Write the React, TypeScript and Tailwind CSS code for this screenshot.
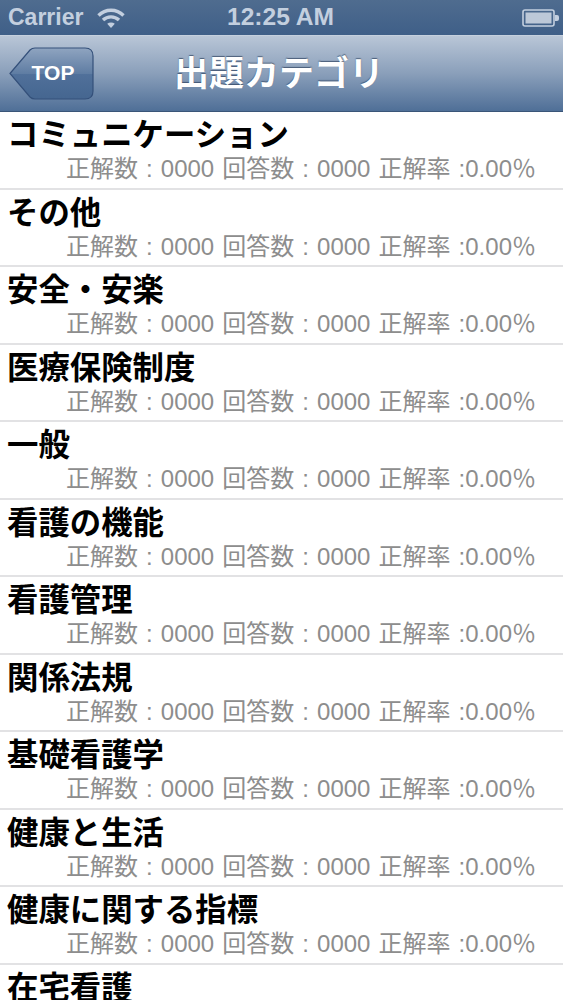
const categories = [
  "コミュニケーション",
  "その他",
  "安全・安楽",
  "医療保険制度",
  "一般",
  "看護の機能",
  "看護管理",
  "関係法規",
  "基礎看護学",
  "健康と生活",
  "健康に関する指標",
  "在宅看護",
];

const sans = "font-['Liberation_Sans','Noto_Sans_CJK_JP',sans-serif]";

function Wifi() {
  return (
    <svg width="28" height="22" viewBox="0 0 28 22" fill="none" stroke="#c3cfdf" strokeWidth="3.4">
      <path d="M1.5 8.5C8.5 1.5 19.5 1.5 26.5 8.5" />
      <path d="M6 13c4.5-4.2 11.5-4.2 16 0" />
      <path d="M14 21l-3.8-4.2c2.2-1.7 5.4-1.7 7.6 0z" fill="#c3cfdf" stroke="none" />
    </svg>
  );
}

function Battery() {
  return (
    <svg width="38" height="18" viewBox="0 0 38 18">
      <rect x="1" y="1" width="31" height="16" rx="2" fill="none" stroke="#c3cfdf" strokeWidth="1.6" />
      <rect x="3.5" y="3.5" width="26" height="11" fill="#bcc8d8" />
      <path d="M33 6h2a2 2 0 0 1 2 2v2a2 2 0 0 1-2 2h-2z" fill="#c3cfdf" />
    </svg>
  );
}

function BackButton() {
  return (
    <div className="relative h-[53px] w-[85px]">
      <svg width="85" height="53" viewBox="0 0 85 53" className="absolute inset-0">
        <defs>
          <linearGradient id="back" x1="0" y1="0" x2="0" y2="1">
            <stop offset="0" stopColor="#8fa4c0" />
            <stop offset="0.5" stopColor="#5f7da3" />
            <stop offset="0.52" stopColor="#50709a" />
            <stop offset="1" stopColor="#456690" />
          </linearGradient>
        </defs>
        <path
          d="M1 26.5 L21 3 Q23 1 26 1 H76 Q84 1 84 9 V44 Q84 52 76 52 H26 Q23 52 21 50 Z"
          fill="url(#back)"
          stroke="#34507a"
          strokeWidth="1.2"
        />
      </svg>
      <span className="absolute inset-0 flex items-center justify-center pb-[3px] pl-[3px] text-[21px] leading-none font-bold text-white">
        TOP
      </span>
    </div>
  );
}

export default function App() {
  return (
    <div className={`h-[1000px] w-[563px] overflow-hidden bg-white ${sans}`}>
      <div className="flex h-[35px] items-center justify-between bg-gradient-to-b from-[#4f6c8f] to-[#3f5f88] pr-[2px] pl-[8px] text-[#c3cfdf]">
        <div className="flex w-[192px] items-center gap-[14px]">
          <span className="text-[23px] leading-none font-bold">Carrier</span>
          <Wifi />
        </div>
        <span className="text-[24.6px] leading-none font-bold">12:25 AM</span>
        <div className="flex w-[200px] justify-end pr-[1px]">
          <Battery />
        </div>
      </div>

      <div className="flex h-[77px] items-center border-t border-b border-t-[#c5d0de] border-b-[#3a5578] bg-gradient-to-b from-[#b9c6d7] via-[#8a9fba] to-[#4f6f97] pl-[9px]">
        <BackButton />
        <h1 className="ml-[80px] text-[35px] leading-none font-bold text-white [text-shadow:0_-1px_1px_rgba(40,60,90,0.7)]">
          出題カテゴリ
        </h1>
      </div>

      <ul>
        {categories.map((name) => (
          <li
            key={name}
            className="h-[77.5px] border-b-2 border-[#e2e2e4] pl-[7px] pr-[27px]"
          >
            <div className="pt-[6px] text-[31.4px] leading-[36px] font-bold whitespace-nowrap text-black">
              {name}
            </div>
            <div className="pt-[1px] text-right text-[24px] leading-[28px] [word-spacing:1.4px] whitespace-nowrap text-[#8d8d8d]">
              正解数 : 0000 回答数 : 0000 正解率 :0.00％
            </div>
          </li>
        ))}
      </ul>
    </div>
  );
}
